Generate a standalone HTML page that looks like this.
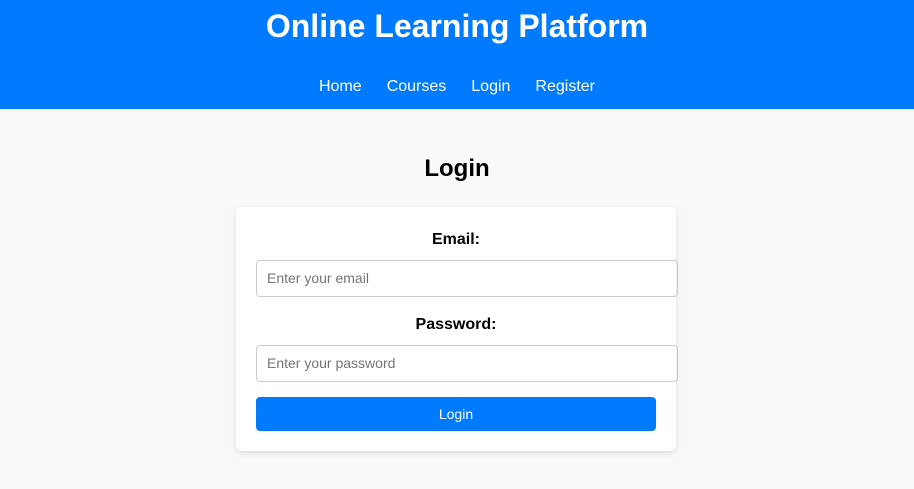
<!DOCTYPE html>
<html><head><style>
body{margin:0;background:#f9f9f9;font-family:"Liberation Sans",Arial,sans-serif;width:914px;height:489px;overflow:hidden}
header{background:#007bff;height:109px;color:#fff;text-align:center;position:relative}
h1{margin:0;position:absolute;top:8px;left:0;right:0;font-size:32px;line-height:37px}
nav{position:absolute;top:77px;left:0;right:0;font-size:16px;line-height:20px}
nav span{margin:0 12.5px}
h2{position:absolute;top:155px;left:0;right:0;margin:0;text-align:center;font-size:24px;line-height:28px}
.card{position:absolute;left:236px;top:207px;width:440px;height:244px;background:#fff;border-radius:6px;box-shadow:0 2px 6px rgba(0,0,0,.12)}
.lab{position:absolute;left:0;right:0;text-align:center;font-weight:bold;font-size:16px}
.in{position:absolute;left:20px;height:37px;border:1px solid #ccc;border-radius:4px;box-sizing:border-box;width:422px;font-size:14px;color:#757575;padding-left:10px;line-height:35px}
.btn{position:absolute;left:20px;top:190px;width:400px;height:34px;background:#007bff;border-radius:4px;color:#fff;text-align:center;font-size:14px;line-height:34px}
</style></head><body>
<header><h1>Online Learning Platform</h1><nav><span>Home</span><span>Courses</span><span>Login</span><span>Register</span></nav></header>
<h2>Login</h2>
<div class="card">
<div class="lab" style="top:24px">Email:</div>
<div class="in" style="top:53px">Enter your email</div>
<div class="lab" style="top:109px">Password:</div>
<div class="in" style="top:138px">Enter your password</div>
<div class="btn">Login</div>
</div>
</body></html>
